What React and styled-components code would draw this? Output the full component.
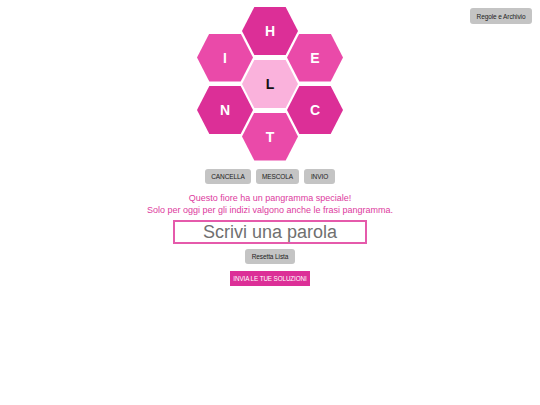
import React from "react";
import styled, { createGlobalStyle } from "styled-components";

const GlobalStyle = createGlobalStyle`
  html, body {
    margin: 0;
    padding: 0;
    background: #ffffff;
    font-family: "Liberation Sans", Arial, sans-serif;
  }
`;

const Page = styled.div`
  width: 540px;
  min-height: 405px;
  position: relative;
  display: flex;
  flex-direction: column;
  align-items: center;
  padding-top: 7px;
  box-sizing: border-box;
`;

const GrayButton = styled.button`
  border: 0;
  border-radius: 3px;
  background: #c4c4c4;
  color: #222;
  font-family: "Liberation Sans", Arial, sans-serif;
  font-size: 6.5px;
  height: 15px;
  width: ${(p) => p.w}px;
  padding: 0;
  cursor: pointer;
  letter-spacing: -0.1px;
`;

const RulesButton = styled(GrayButton)`
  position: absolute;
  top: 8px;
  right: 8px;
  height: 16px;
`;

const Flower = styled.div`
  position: relative;
  width: 146px;
  height: 154px;
`;

const Hex = styled.div`
  position: absolute;
  width: 56px;
  height: 48px;
  clip-path: polygon(22% 0, 78% 0, 100% 50%, 78% 100%, 22% 100%, 0 50%);
  background: ${(p) => p.bg};
  color: ${(p) => (p.center ? "#111" : "#fff")};
  display: flex;
  align-items: center;
  justify-content: center;
  font-weight: bold;
  font-size: 14px;
`;

const Controls = styled.div`
  display: flex;
  gap: 5px;
  margin-top: 8px;
`;

const Notice = styled.p`
  margin: 9px 0 0;
  color: #dd3a9e;
  font-size: 9px;
  line-height: 11.5px;
  text-align: center;
`;

const WordInput = styled.input`
  margin-top: 4px;
  width: 194px;
  height: 24px;
  box-sizing: border-box;
  border: 2px solid #e55aab;
  outline: none;
  text-align: center;
  font-family: "Liberation Sans", Arial, sans-serif;
  font-size: 18px;
  color: #333;
  padding: 0;
  &::placeholder {
    color: #707070;
  }
`;

const ResetButton = styled(GrayButton)`
  margin-top: 5px;
`;

const SubmitButton = styled.button`
  margin-top: 7px;
  border: 0;
  background: #dc2f97;
  color: #fff;
  font-family: "Liberation Sans", Arial, sans-serif;
  font-size: 6.3px;
  height: 15px;
  width: 80px;
  padding: 0;
  letter-spacing: -0.1px;
`;

const DARK = "#dc2f97";
const MID = "#ea4aa9";
const LIGHT = "#fab2dc";

const hexes = [
  { l: "H", x: 45, y: 0, bg: DARK },
  { l: "I", x: 0, y: 26.5, bg: MID },
  { l: "E", x: 90, y: 26.5, bg: MID },
  { l: "L", x: 45, y: 53, bg: LIGHT, center: true },
  { l: "N", x: 0, y: 79, bg: DARK },
  { l: "C", x: 90, y: 79, bg: DARK },
  { l: "T", x: 45, y: 105.5, bg: MID },
];

export default function App() {
  return (
    <>
      <GlobalStyle />
      <Page>
        <RulesButton w={62}>Regole e Archivio</RulesButton>
        <Flower>
          {hexes.map((h) => (
            <Hex key={h.l} bg={h.bg} center={h.center} style={{ left: h.x, top: h.y }}>
              {h.l}
            </Hex>
          ))}
        </Flower>
        <Controls>
          <GrayButton w={46}>CANCELLA</GrayButton>
          <GrayButton w={43}>MESCOLA</GrayButton>
          <GrayButton w={31}>INVIO</GrayButton>
        </Controls>
        <Notice>
          Questo fiore ha un pangramma speciale!
          <br />
          Solo per oggi per gli indizi valgono anche le frasi pangramma.
        </Notice>
        <WordInput placeholder="Scrivi una parola" />
        <ResetButton w={50}>Resetta Lista</ResetButton>
        <SubmitButton>INVIA LE TUE SOLUZIONI</SubmitButton>
      </Page>
    </>
  );
}
